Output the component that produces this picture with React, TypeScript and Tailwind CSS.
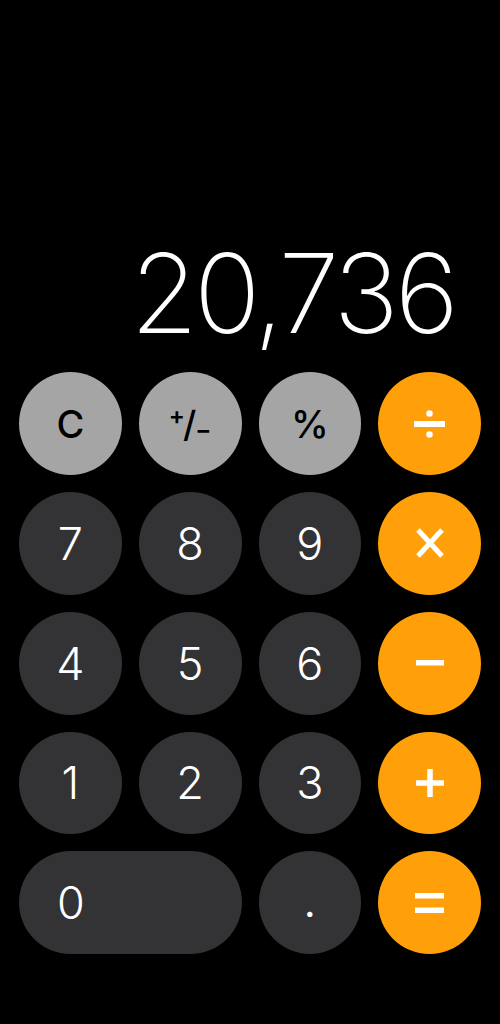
import type { ReactNode } from "react";

type Kind = "fn" | "num" | "op";

const styles: Record<Kind, string> = {
  fn: "bg-[#a5a5a5] text-black",
  num: "bg-[#333335] text-white",
  op: "bg-[#ff9f0a] text-white",
};

function Key({
  kind,
  children,
  wide = false,
}: {
  kind: Kind;
  children: ReactNode;
  wide?: boolean;
}) {
  return (
    <button
      className={`${styles[kind]} ${
        wide ? "col-span-2 justify-start pl-[38px]" : "aspect-square justify-center"
      } flex h-[102.75px] items-center rounded-full`}
    >
      {children}
    </button>
  );
}

const Divide = () => (
  <svg width="31" height="28" viewBox="0 0 31 28" fill="white">
    <rect x="0" y="11" width="31" height="6" rx="0.5" />
    <circle cx="15.5" cy="3.5" r="3.3" />
    <circle cx="15.5" cy="24.5" r="3.3" />
  </svg>
);

const Times = () => (
  <svg width="28" height="30" viewBox="0 0 28 30" stroke="white" strokeWidth="5">
    <line x1="2" y1="2" x2="26" y2="28" />
    <line x1="26" y1="2" x2="2" y2="28" />
  </svg>
);

const Minus = () => (
  <svg width="28" height="6" viewBox="0 0 28 6" fill="white">
    <rect x="0" y="0" width="28" height="5.5" />
  </svg>
);

const Plus = () => (
  <svg width="28" height="28" viewBox="0 0 28 28" fill="white">
    <rect x="0" y="11.25" width="28" height="5.5" />
    <rect x="11.25" y="0" width="5.5" height="28" />
  </svg>
);

const Equals = () => (
  <svg width="29" height="20" viewBox="0 0 29 20" fill="white">
    <rect x="0" y="0" width="29" height="5.5" />
    <rect x="0" y="14.5" width="29" height="5.5" />
  </svg>
);

const digit = "text-[45px] leading-none font-light";
const fn = "text-[38px] leading-none font-medium";

export default function App() {
  return (
    <div
      className="flex h-[1024px] w-[500px] flex-col justify-end bg-black pb-[70px]"
      style={{ fontFamily: "Inter, 'Noto Sans', sans-serif" }}
    >
      <div className="mb-[24px] pr-[45px] text-right text-[110px] leading-none font-extralight tracking-[-4px] text-white">
        20,736
      </div>

      <div className="grid grid-cols-4 gap-x-[17px] gap-y-[17px] px-[19px]">
        <Key kind="fn">
          <span className={fn}>C</span>
        </Key>
        <Key kind="fn">
          <span className="flex items-center text-[36px] leading-none font-medium">
            <span className="relative -top-[8px] -mr-[2px] text-[24px] font-semibold">+</span>
            <span>/</span>
            <span className="relative top-[6px] -ml-[1px] text-[24px] font-semibold">−</span>
          </span>
        </Key>
        <Key kind="fn">
          <span className={fn}>%</span>
        </Key>
        <Key kind="op">
          <Divide />
        </Key>

        <Key kind="num"><span className={digit}>7</span></Key>
        <Key kind="num"><span className={digit}>8</span></Key>
        <Key kind="num"><span className={digit}>9</span></Key>
        <Key kind="op">
          <Times />
        </Key>

        <Key kind="num"><span className={digit}>4</span></Key>
        <Key kind="num"><span className={digit}>5</span></Key>
        <Key kind="num"><span className={digit}>6</span></Key>
        <Key kind="op">
          <Minus />
        </Key>

        <Key kind="num"><span className={digit}>1</span></Key>
        <Key kind="num"><span className={digit}>2</span></Key>
        <Key kind="num"><span className={digit}>3</span></Key>
        <Key kind="op">
          <Plus />
        </Key>

        <Key kind="num" wide>
          <span className={digit}>0</span>
        </Key>
        <Key kind="num">
          <span className="text-[40px] leading-none font-normal">.</span>
        </Key>
        <Key kind="op">
          <Equals />
        </Key>
      </div>
    </div>
  );
}
